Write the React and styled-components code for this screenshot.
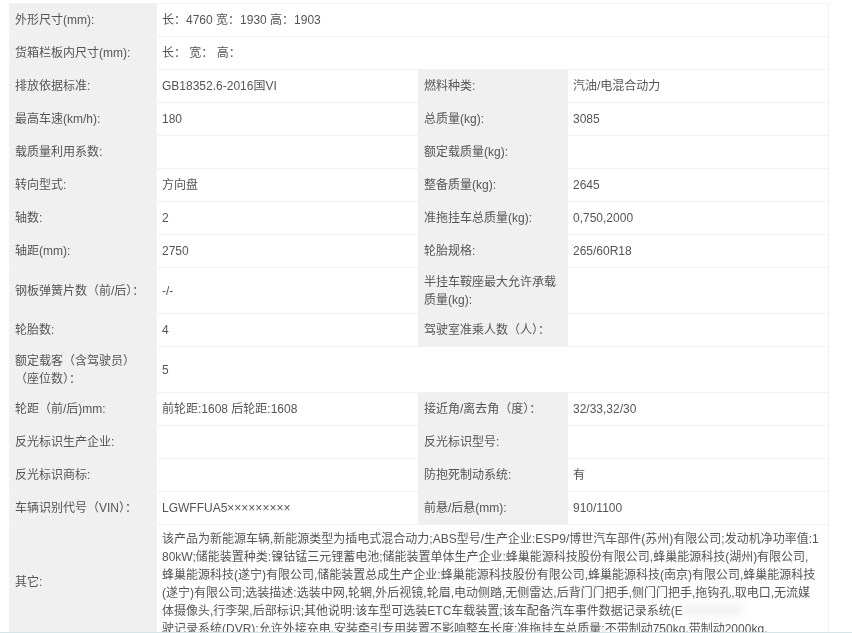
import React from 'react';
import styled, { createGlobalStyle } from 'styled-components';

const GlobalStyle = createGlobalStyle`
  html, body {
    margin: 0;
    padding: 0;
    height: 100%;
    overflow: hidden;
    background: #fff;
  }
  #root {
    height: 100%;
  }
`;

const Page = styled.div`
  height: 633px;
  display: flex;
  flex-direction: column;
  font-family: "Liberation Sans", "Noto Sans CJK SC", sans-serif;
  font-size: 12px;
  color: #555;
`;

const Viewport = styled.div`
  position: relative;
  height: 629px;
  overflow: hidden;
  padding: 3px 24px 0 9px;
  filter: blur(0.35px);
`;

const Band = styled.div`
  flex: 1;
  background: #d5e5e6;
`;

const Table = styled.table`
  width: 819px;
  table-layout: fixed;
  border-collapse: collapse;
  border: 1px solid #f2f2f2;
`;

const Row = styled.tr`
  height: ${props => props.$height || 33}px;
`;

const Label = styled.th`
  background: #f0f0f0;
  border: 1px solid #f2f2f2;
  padding: 0 5px;
  font-weight: normal;
  text-align: left;
  line-height: 18px;
  color: #555;
`;

const Value = styled.td`
  background: #fff;
  border: 1px solid #f2f2f2;
  padding: 0 5px;
  line-height: 18px;
`;

const LongText = styled.div`
  height: 108px;
  padding-top: 5px;
  line-height: 18px;
  white-space: nowrap;
`;

const Smudge = styled.div`
  position: absolute;
  left: 682px;
  top: 604px;
  width: 60px;
  height: 12px;
  background: rgba(225, 225, 225, 0.45);
  filter: blur(4px);
`;

const rows = [
  { height: 33, cells: [['外形尺寸(mm):', '长：4760 宽：1930 高：1903']] },
  { height: 33, cells: [['货箱栏板内尺寸(mm):', '长：  宽：  高：']] },
  { height: 33, cells: [['排放依据标准:', 'GB18352.6-2016国VI'], ['燃料种类:', '汽油/电混合动力']] },
  { height: 33, cells: [['最高车速(km/h):', '180'], ['总质量(kg):', '3085']] },
  { height: 33, cells: [['载质量利用系数:', ''], ['额定载质量(kg):', '']] },
  { height: 33, cells: [['转向型式:', '方向盘'], ['整备质量(kg):', '2645']] },
  { height: 33, cells: [['轴数:', '2'], ['准拖挂车总质量(kg):', '0,750,2000']] },
  { height: 33, cells: [['轴距(mm):', '2750'], ['轮胎规格:', '265/60R18']] },
  { height: 46, cells: [['钢板弹簧片数（前/后）：', '-/-'], ['半挂车鞍座最大允许承载质量(kg):', '']] },
  { height: 33, cells: [['轮胎数:', '4'], ['驾驶室准乘人数（人）：', '']] },
  { height: 46, cells: [['额定载客（含驾驶员）（座位数）：', '5']] },
  { height: 33, cells: [['轮距（前/后)mm:', '前轮距:1608 后轮距:1608'], ['接近角/离去角（度）：', '32/33,32/30']] },
  { height: 33, cells: [['反光标识生产企业:', ''], ['反光标识型号:', '']] },
  { height: 33, cells: [['反光标识商标:', ''], ['防抱死制动系统:', '有']] },
  { height: 33, cells: [['车辆识别代号（VIN）：', 'LGWFFUA5×××××××××'], ['前悬/后悬(mm):', '910/1100']] },
];

const otherLines = [
  '该产品为新能源车辆,新能源类型为插电式混合动力;ABS型号/生产企业:ESP9/博世汽车部件(苏州)有限公司;发动机净功率值:1',
  '80kW;储能装置种类:镍钴锰三元锂蓄电池;储能装置单体生产企业:蜂巢能源科技股份有限公司,蜂巢能源科技(湖州)有限公司,',
  '蜂巢能源科技(遂宁)有限公司,储能装置总成生产企业:蜂巢能源科技股份有限公司,蜂巢能源科技(南京)有限公司,蜂巢能源科技',
  '(遂宁)有限公司;选装描述:选装中网,轮辋,外后视镜,轮眉,电动侧踏,无侧雷达,后背门门把手,侧门门把手,拖钩孔,取电口,无流媒',
  '体摄像头,行李架,后部标识;其他说明:该车型可选装ETC车载装置;该车配备汽车事件数据记录系统(E',
  '驶记录系统(DVR);允许外接充电,安装牵引专用装置不影响整车长度;准拖挂车总质量:不带制动750kg,带制动2000kg,',
];

const App = () => {
  return (
    <Page>
      <GlobalStyle />
      <Viewport>
        <Table>
          <colgroup>
            <col style={{ width: 147 }} />
            <col style={{ width: 262 }} />
            <col style={{ width: 149 }} />
            <col style={{ width: 261 }} />
          </colgroup>
          <tbody>
            {rows.map(row => (
              <Row key={row.cells[0][0]} $height={row.height}>
                {row.cells.map(([label, value]) => (
                  <React.Fragment key={label}>
                    <Label>{label}</Label>
                    <Value colSpan={row.cells.length === 1 ? 3 : 1}>{value}</Value>
                  </React.Fragment>
                ))}
              </Row>
            ))}
            <Row $height={113}>
              <Label>其它:</Label>
              <Value colSpan={3}>
                <LongText>
                  {otherLines.map(line => (
                    <div key={line}>{line}</div>
                  ))}
                </LongText>
              </Value>
            </Row>
          </tbody>
        </Table>
        <Smudge />
      </Viewport>
      <Band />
    </Page>
  );
};

export default App;
